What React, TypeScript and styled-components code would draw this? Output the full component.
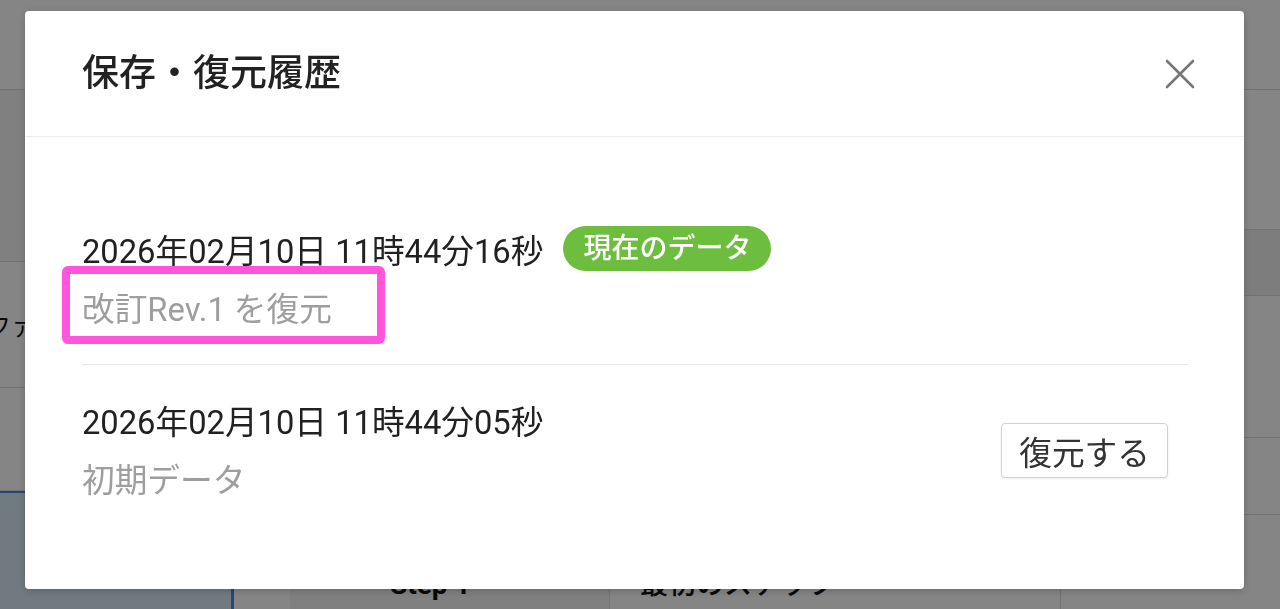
import * as React from "react";
import styled, { createGlobalStyle } from "styled-components";

const GlobalStyle = createGlobalStyle`
  html, body {
    margin: 0;
    padding: 0;
  }
  body {
    font-family: Roboto, "Noto Sans CJK JP", sans-serif;
    background: #fff;
  }
  * {
    box-sizing: border-box;
  }
`;

/* ---------- page behind the dialog ---------- */

const Page = styled.div`
  height: 609px;
  overflow: hidden;
  display: flex;
  flex-direction: column;
  background: #fff;
`;

const TopBar = styled.header`
  flex: 0 0 90px;
  border-bottom: 1px solid #d8d8d8;
`;

const Workspace = styled.div`
  flex: 1;
  display: flex;
`;

const MainColumn = styled.div`
  flex: 1;
  display: flex;
  flex-direction: column;
`;

const Band = styled.div<{ $height: number; $tint?: string }>`
  flex: 0 0 ${(p) => p.$height}px;
  background: ${(p) => p.$tint || "#fff"};
  border-bottom: 1px solid #dcdcdc;
  display: flex;
  align-items: center;
`;

const BandLabel = styled.span`
  margin-left: -13px;
  font-size: 24px;
  color: #111;
`;

const StepTable = styled.div`
  flex: 1;
  display: grid;
  grid-template-columns: 234px 56px 320px 1fr;
`;

const SideCell = styled.div`
  background: #d6eaf5;
  border-top: 2px solid #3f8ae6;
  border-right: 3px solid #3f8ae6;
`;

const Cell = styled.div<{ $divider?: boolean; $bold?: boolean }>`
  padding: 80px 0 0 ${(p) => (p.$bold ? 100 : 30)}px;
  font-size: 28px;
  line-height: 28px;
  font-weight: ${(p) => (p.$bold ? 700 : 500)};
  color: #111;
  border-right: ${(p) => (p.$divider ? "1px solid #e0e0e0" : "none")};
  background: ${(p) => (p.$bold ? "#f6f6f6" : "#fff")};
`;

const Aside = styled.aside`
  flex: 0 0 220px;
  display: flex;
  flex-direction: column;
  border-left: 1px solid #dcdcdc;
`;

/* ---------- dialog ---------- */

const Overlay = styled.div`
  position: fixed;
  inset: 0;
  background: rgba(0, 0, 0, 0.48);
  display: flex;
  align-items: flex-start;
  padding: 11px 36px 0 25px;
`;

const Dialog = styled.section`
  width: 100%;
  background: #fff;
  border-radius: 4px;
  box-shadow: 0 2px 8px rgba(0, 0, 0, 0.2);
`;

const DialogHeader = styled.div`
  display: flex;
  align-items: center;
  justify-content: space-between;
  padding: 35px 49px 35px 57px;
  border-bottom: 1px solid #ececec;
`;

const Title = styled.h2`
  margin: 0;
  font-size: 37px;
  line-height: 55px;
  font-weight: 500;
  color: #222;
`;

const CloseButton = styled.button`
  width: 30px;
  height: 30px;
  padding: 0;
  border: none;
  background: transparent;
  display: flex;
  cursor: pointer;
`;

const DialogBody = styled.div`
  padding: 57px 56px 54px 57px;
`;

const HistoryItem = styled.div`
  display: flex;
  align-items: center;
  justify-content: space-between;
  padding: 30px 0;

  & + & {
    border-top: 1px solid #e6e6e6;
  }
`;

const Info = styled.div`
  display: flex;
  flex-direction: column;
  align-items: flex-start;
  gap: 14px;
`;

const DateLine = styled.div`
  display: flex;
  align-items: center;
  gap: 20px;
  height: 48px;
  font-size: 32.7px;
  color: #212121;
`;

const CurrentBadge = styled.span`
  height: 45px;
  padding: 0 20px;
  border-radius: 23px;
  background: #6dbe3f;
  color: #fff;
  font-size: 28px;
  line-height: 45px;
  font-weight: 500;
`;

const Note = styled.div`
  position: relative;
  font-size: 32.7px;
  line-height: 48px;
  color: #9e9e9e;
`;

const Highlight = styled.span`
  position: absolute;
  left: -20px;
  top: -20px;
  width: 323px;
  height: 78px;
  border: 8px solid #ff55dd;
  border-radius: 6px;
  pointer-events: none;
`;

const RestoreButton = styled.button`
  height: 55px;
  margin-right: 20px;
  padding: 0 17px;
  border: 1px solid #d2d2d2;
  border-radius: 4px;
  background: #fff;
  box-shadow: 0 1px 2px rgba(0, 0, 0, 0.08);
  font-family: inherit;
  font-size: 32.7px;
  color: #333;
  cursor: pointer;
`;

const histories = [
  {
    savedAt: "2026年02月10日 11時44分16秒",
    note: "改訂Rev.1 を復元",
    current: true,
  },
  {
    savedAt: "2026年02月10日 11時44分05秒",
    note: "初期データ",
    current: false,
  },
];

const CloseIcon = () => (
  <svg width="30" height="30" viewBox="0 0 30 30">
    <path
      d="M2 2 L28 28 M28 2 L2 28"
      stroke="#777"
      strokeWidth="2.6"
      strokeLinecap="round"
      fill="none"
    />
  </svg>
);

const App = () => {
  const items = histories.map((history, index) => (
    <HistoryItem key={index}>
      <Info>
        <DateLine>
          <span>{history.savedAt}</span>
          {history.current && <CurrentBadge>現在のデータ</CurrentBadge>}
        </DateLine>
        <Note>
          {history.note}
          {index === 0 && <Highlight />}
        </Note>
      </Info>
      {!history.current && <RestoreButton>復元する</RestoreButton>}
    </HistoryItem>
  ));

  return (
    <>
      <GlobalStyle />
      <Page>
        <TopBar />
        <Workspace>
          <MainColumn>
            <Band $height={172} $tint="#f6f6f6" />
            <Band $height={126}>
              <BandLabel>ファイル</BandLabel>
            </Band>
            <Band $height={103} />
            <StepTable>
              <SideCell />
              <Cell />
              <Cell $divider $bold>
                Step 1
              </Cell>
              <Cell>最初のステップ</Cell>
            </StepTable>
          </MainColumn>
          <Aside>
            <Band $height={140} />
            <Band $height={66} $tint="#f0f0f0" />
            <Band $height={142} />
            <Band $height={77} />
          </Aside>
        </Workspace>
      </Page>

      <Overlay>
        <Dialog>
          <DialogHeader>
            <Title>保存・復元履歴</Title>
            <CloseButton aria-label="閉じる">
              <CloseIcon />
            </CloseButton>
          </DialogHeader>
          <DialogBody>{items}</DialogBody>
        </Dialog>
      </Overlay>
    </>
  );
};

export default App;
